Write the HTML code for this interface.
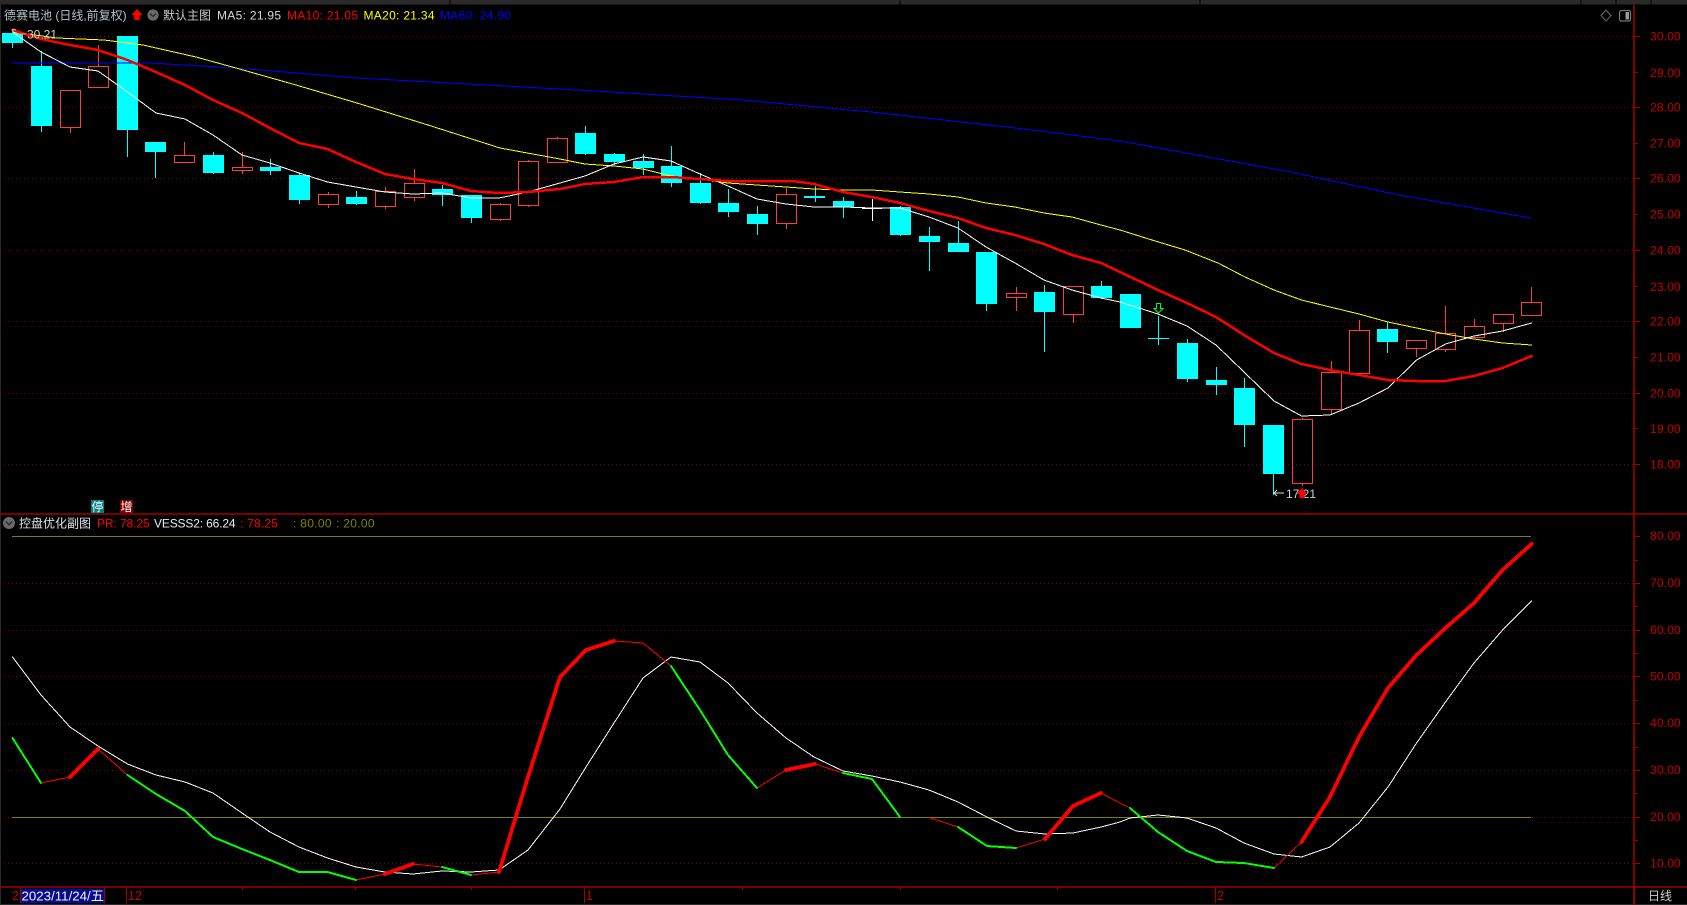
<!DOCTYPE html>
<html lang="zh">
<head>
<meta charset="utf-8">
<title>德赛电池</title>
<style>
html,body{margin:0;padding:0;background:#000;width:1687px;height:905px;overflow:hidden}
svg{display:block;position:absolute;left:0;top:0}
text{font-family:"Liberation Sans","Noto Sans CJK SC",sans-serif;font-size:12px}
.ax text{fill:#c00000;font-size:12.3px}
.l{fill:none;stroke-linejoin:round;stroke-linecap:round}
</style>
</head>
<body>
<svg width="1687" height="905" viewBox="0 0 1687 905" xmlns="http://www.w3.org/2000/svg">
<rect width="1687" height="905" fill="#000"/>
<!-- window edge strip -->
<rect x="0" y="0" width="1687" height="4.5" fill="#2a2a2a"/>
<path d="M1581 0V5M1616 0V5M1651 0V5M1200 0V5M900 0V5M450 0V5" stroke="#000" stroke-width="1"/>
<rect x="0" y="0" width="1" height="905" fill="#2a2a2a"/>
<rect x="0" y="904" width="1687" height="1" fill="#2a2a2a"/>

<!-- upper gridlines -->
<path shape-rendering="crispEdges" d="M0 36.5H1633M0 107.5H1633M0 178.5H1633M0 250.5H1633M0 321.5H1633M0 393.5H1633M0 464.5H1633" stroke="#8c0000" stroke-width="1" stroke-dasharray="1 3" fill="none"/>
<!-- lower gridlines -->
<path shape-rendering="crispEdges" d="M0 583.5H1633M0 630.5H1633M0 676.5H1633M0 723.5H1633M0 770.5H1633M0 817.5H1633M0 863.5H1633" stroke="#8c0000" stroke-width="1" stroke-dasharray="1 3" fill="none"/>

<!-- cyan wicks -->
<path shape-rendering="crispEdges" stroke="#00ffff" stroke-width="1" fill="none" d="M12.5 33V48M41.5 51V132M127.5 36V157M155.5 142V178M213.5 152V174M270.5 159V175M299.5 173V204M356.5 191V205M442.5 185V206M471.5 195V223M585.5 126V155M614.5 153V165M643.5 154V175M671.5 146V187M700.5 173V204M728.5 189V217M757.5 206V235M815.5 186V202M843.5 197V218M900.5 206V236M929.5 227V271M958.5 221V252M986.5 252V311M1044.5 285V352M1101.5 281V299M1158.5 316V345M1148 338.5H1169M1187.5 339V382M1216.5 367V395M1244.5 378V447M1273.5 425V495M1387.5 322V353"/>
<!-- cyan bodies -->
<path shape-rendering="crispEdges" fill="#00ffff" d="M2 33h21V43h-21zM31 66h21V126h-21zM117 36h21V130h-21zM145 142h21V152h-21zM203 155h21V173h-21zM260 167h21V171h-21zM289 175h21V200h-21zM346 197h21V204h-21zM432 189h21V195h-21zM461 195h21V218h-21zM575 133h21V154h-21zM604 154h21V162h-21zM633 161h21V168h-21zM661 166h21V183h-21zM690 183h21V203h-21zM718 203h21V212h-21zM747 214h21V224h-21zM804 196h21V198h-21zM833 201h21V207h-21zM890 207h21V235h-21zM919 236h21V242h-21zM948 243h21V252h-21zM976 252h21V304h-21zM1034 292h21V312h-21zM1091 286h21V298h-21zM1120 294h21V328h-21zM1177 343h21V379h-21zM1206 380h21V385h-21zM1234 388h21V425h-21zM1263 425h21V474h-21zM1377 329h21V342h-21z"/>
<!-- white doji -->
<path shape-rendering="crispEdges" stroke="#ffffff" stroke-width="1" fill="none" d="M872.5 199V221M862 208.5H882"/>
<!-- red candles -->
<path shape-rendering="crispEdges" stroke="#ff3c3c" stroke-width="1" fill="none" d="M60.5 90.5h20v37h-20zM70.5 127V133M88.5 66.5h20v21h-20zM98.5 45V66M98.5 87V88M174.5 155.5h20v7h-20zM184.5 142V155M232.5 167.5h20v3h-20zM242.5 152V167M242.5 170V174M318.5 194.5h20v10h-20zM328.5 192V194M328.5 204V208M375.5 191.5h20v15h-20zM385.5 187V191M385.5 206V209M404.5 183.5h20v14h-20zM414.5 169V183M414.5 197V201M490.5 204.5h20v15h-20zM500.5 203V204M500.5 219V221M518.5 161.5h20v44h-20zM528.5 160V161M528.5 205V207M547.5 138.5h20v24h-20zM557.5 137V138M776.5 194.5h20v29h-20zM786.5 188V194M786.5 223V229M1006.5 293.5h20v4h-20zM1016.5 287V293M1016.5 297V311M1063.5 286.5h20v28h-20zM1073.5 314V323M1292.5 419.5h20v64h-20zM1302.5 418V419M1302.5 483V486M1321.5 372.5h20v37h-20zM1331.5 361V372M1331.5 409V415M1349.5 330.5h20v43h-20zM1359.5 320V330M1406.5 340.5h20v8h-20zM1416.5 348V357M1435.5 333.5h20v16h-20zM1445.5 306V333M1445.5 349V352M1464.5 326.5h20v11h-20zM1474.5 319V326M1493.5 314.5h20v9h-20zM1503.5 323V332M1521.5 302.5h20v13h-20zM1531.5 287V302"/>

<!-- MA60 -->
<polyline class="l" shape-rendering="crispEdges" stroke="#0000ff" stroke-width="1" points="12.5,63 150,63 236,68 357,78 560,89 743,100 881,113 1024,129 1120,141 1291,172 1399,195 1531,218"/>
<!-- MA20 -->
<polyline class="l" shape-rendering="crispEdges" stroke="#ffff00" stroke-width="1" points="12.5,32 57,38 104,40 143,45 196,57 236,68 296,85 357,103 428,125 500,148 560,159 585,164 614,166 643,169 671,176 700,179 728,183 757,185 786,187 814,189 843,190 872,190 900,192 929,194 958,197 986,203 1015,207 1044,213 1072,217 1101,225 1120,230 1152,240 1185,250 1218,263 1245,277 1274,290 1301.5,300 1330,307 1359,314 1388,322 1416.6,328 1445.5,334 1474,339 1502.6,343 1531.6,345"/>
<!-- MA5 -->
<polyline class="l" shape-rendering="crispEdges" stroke="#ffffff" stroke-width="1" points="12.5,32 41,52 70,67 98,71 127.5,92 156,113 185,119 213,135 242,155 270,163 299,173 327.5,182 356,187 385,192 413,194 442,193 471,198 499,198 528,192 560,183 585,176 614,164 643,157 671,161 700,174 728,186 757,199 786,204 814,207 843,207 872,208 900,208 929,217 958,228 986,247 1015,263 1044,280 1072,290 1101,298 1120,302 1158,314 1187,326 1216,345 1244,372 1274,401 1301.5,416 1330,415 1359,403 1388,388 1416.6,360 1445.5,344 1474,336 1502.6,331 1531.6,323"/>
<!-- MA10 -->
<polyline class="l" shape-rendering="crispEdges" stroke="#ff0000" stroke-width="2.5" points="12.5,30 41,39 70,45 98,50 127.5,60 156,72 185,85 213,100 242,113 270,128 299,143 327.5,149 356,162 385,174 413,179 442,183 471,191 499,193 528,192 560,189 585,184 614,182 643,177 671,177 700,179 728,181 757,181 793,181 814,184 843,192 872,197 900,203 929,211 958,218 986,228 1015,235 1044,244 1072,255 1101,263 1120,272 1158,290 1187,303 1216,317 1244,335 1274,353 1301.5,364 1330,370 1359,375 1388,380 1416.6,381 1445.5,381 1474,376 1502.6,368 1531.6,356"/>

<!-- high/low markers -->
<path d="M12.5 29L16 30M12.5 29L13 33" stroke="#c8c8c8" stroke-width="1" fill="none"/>
<path d="M13 34H26" stroke="#c8c8c8" stroke-width="1" fill="none" opacity=".7"/>
<text x="27" y="38.5" fill="#d0d0d0">30.21</text>
<path d="M1274 493H1284M1274 493L1277 490M1274 493L1277 496" stroke="#d8d8d8" stroke-width="1" fill="none"/>
<text x="1286" y="498" fill="#c4d4e4">17.21</text>
<path d="M1302 488L1307.5 494H1304.5V498H1299.5V494H1296.5Z" fill="#ff0000"/>
<path shape-rendering="crispEdges" d="M1156.5 303.5H1160.5V308.5H1163L1158.5 313L1154 308.5H1156.5Z" fill="none" stroke="#00ff00" stroke-width="0.8"/>

<!-- panes frame -->
<path d="M0 514H1687M0 887H1687" stroke="#a00000" stroke-width="1.5" fill="none"/>
<path d="M1634 5V905" stroke="#a00000" stroke-width="1.6" fill="none"/>
<!-- ticks -->
<path shape-rendering="crispEdges" stroke="#a00000" stroke-width="1" fill="none" d="M1635 36.5H1640M1635 72.5H1638M1635 107.5H1640M1635 143.5H1638M1635 178.5H1640M1635 214.5H1638M1635 250.5H1640M1635 286.5H1638M1635 321.5H1640M1635 357.5H1638M1635 393.5H1640M1635 428.5H1638M1635 464.5H1640M1635 536.5H1640M1635 560.5H1638M1635 583.5H1640M1635 606.5H1638M1635 630.5H1640M1635 653.5H1638M1635 676.5H1640M1635 700.5H1638M1635 723.5H1640M1635 747.5H1638M1635 770.5H1640M1635 793.5H1638M1635 817.5H1640M1635 840.5H1638M1635 863.5H1640"/>
<!-- axis labels -->
<g class="ax">
<text x="1650" y="40.5">30.00</text>
<text x="1650" y="77">29.00</text>
<text x="1650" y="111.5">28.00</text>
<text x="1650" y="147.5">27.00</text>
<text x="1650" y="182.5">26.00</text>
<text x="1650" y="218.5">25.00</text>
<text x="1650" y="254.5">24.00</text>
<text x="1650" y="291">23.00</text>
<text x="1650" y="325.5">22.00</text>
<text x="1650" y="361.5">21.00</text>
<text x="1650" y="397.5">20.00</text>
<text x="1650" y="433">19.00</text>
<text x="1650" y="468.5">18.00</text>
<text x="1650" y="540">80.00</text>
<text x="1650" y="587">70.00</text>
<text x="1650" y="634">60.00</text>
<text x="1650" y="680.5">50.00</text>
<text x="1650" y="727">40.00</text>
<text x="1650" y="774">30.00</text>
<text x="1650" y="821">20.00</text>
<text x="1650" y="867.5">10.00</text>
</g>

<!-- olive lines -->
<path shape-rendering="crispEdges" d="M12 536.5H1531M12 817.5H1531" stroke="#808000" stroke-width="1" fill="none"/>

<!-- VESSS2 -->
<polyline class="l" shape-rendering="crispEdges" stroke="#ffffff" stroke-width="1" points="12.5,657 41,695 70,727 98,746 127.5,764 156,775 185,782 213,793 242,813 270,832 299,847 327.5,858 356,867 385,872 413,874 442,871 471,872 499,870 528,850 560,809 586,767 614,723 643,678 671,657 700,662 728,683 757,713 786,738 814,757 843,771 872,776 900,782 929,790 958,802 987,817 1016,831 1045,834 1073,833 1101,827 1120,822 1130,818 1158,815 1187,818 1216,828 1244,843 1274,854 1301.5,857 1330,847 1359,823 1388,787 1416.6,743 1445.5,702 1474,663 1502.6,630 1531.6,601"/>

<!-- PR thin red -->
<path class="l" shape-rendering="crispEdges" stroke="#ff0000" stroke-width="1" d="M41 783L70 777M98 749L127.5 775M356 880L385 874M413 864L442 867M471 875L499 872M614 641L643 643L671 666M757 788L786 770M815 764L843 773M929.6 817.7L958 827M1016 848L1045 839M1101 793L1120 803L1130 808M1274 868L1301.5 842"/>
<!-- PR green -->
<g class="l" shape-rendering="crispEdges" stroke="#00ff00" stroke-width="2">
<path d="M12.5 738L41 783"/>
<path d="M127.5 775L156 794L185 811L213 837L242 849L270 860L299 872L327.5 872L356 880"/>
<path d="M442 867L471 875"/>
<path d="M671 666L700 710L728 755L757 788"/>
<path d="M843 773L872 779L900 817"/>
<path d="M958 827L987 846L1016 848"/>
<path d="M1130 808L1158 832L1187 851L1216 862L1244 863L1274 868"/>
</g>
<!-- PR thick red -->
<g class="l" shape-rendering="crispEdges" stroke="#ff0000" stroke-width="3.8">
<path d="M70 777L98 749"/>
<path d="M385 874L413 864"/>
<path d="M499 872L528 777L560 677L586 650L614 641"/>
<path d="M786 770L815 764"/>
<path d="M1045 839L1073 806L1101 793"/>
<path d="M1301.5 842L1330 797L1359 737L1388 688L1416.6 655L1445.5 628L1474 603L1502.6 570L1531.6 544"/>
</g>

<!-- bottom axis -->
<path shape-rendering="crispEdges" stroke="#a00000" stroke-width="1" fill="none" d="M126.5 887V903M584.5 887V903M1215.5 887V903M242.5 887V890M355.5 887V890M471.5 887V890M742.5 887V890M900.5 887V890M1057.5 887V890M1634.5 887V905"/>
<text x="12" y="900" fill="#c00000" style="font-size:12.5px">2</text>
<rect x="21" y="889" width="84" height="14" fill="#0a0a8c"/>
<path shape-rendering="crispEdges" d="M20.5 887V903M104.5 887V903" stroke="#a00000" stroke-width="1"/>
<text x="21.5" y="900.5" fill="#f0f4ff" style="font-size:13.3px">2023/11/24/五</text>
<text x="128" y="900" fill="#c00000" style="font-size:12.5px">12</text>
<text x="586" y="900" fill="#c00000" style="font-size:12.5px">1</text>
<text x="1217" y="900" fill="#c00000" style="font-size:12.5px">2</text>
<text x="1648" y="900" fill="#cfcfcf">日线</text>

<!-- badges -->
<rect x="91" y="500" width="13" height="13" fill="#008080"/>
<text x="91.5" y="511" fill="#ffffff">停</text>
<rect x="120" y="500" width="13" height="13" fill="#800000"/>
<text x="120.5" y="511" fill="#ffffff">增</text>

<!-- top header -->
<text x="4" y="19.5" fill="#b8c0c8">德赛电池 (日线,前复权)</text>
<path d="M137 9L142.5 15H139.7V20H134.3V15H131.5Z" fill="#ff0000"/>
<circle cx="153" cy="15" r="5.6" fill="#6a6a6a"/>
<path d="M150 13.5L153 16.5L156 13.5" fill="none" stroke="#2a2a2a" stroke-width="1.4"/>
<text x="163" y="19.5" fill="#c4c8cc">默认主图</text>
<text x="217" y="19.5" fill="#d8d8d8" style="letter-spacing:.3px">MA5: 21.95</text>
<text x="287" y="19.5" fill="#ff0000" style="letter-spacing:.3px">MA10: 21.05</text>
<text x="363.5" y="19.5" fill="#ffff00" style="letter-spacing:.3px">MA20: 21.34</text>
<text x="440" y="19.5" fill="#0000ff" style="letter-spacing:.3px">MA60: 24.90</text>
<!-- top right icons -->
<path d="M1606 10L1611 15.5L1606 21L1601 15.5Z" fill="none" stroke="#666" stroke-width="1"/>
<rect x="1619.5" y="10.5" width="11" height="10.5" rx="2" fill="none" stroke="#777" stroke-width="1.2"/>
<rect x="1625.5" y="12" width="3.5" height="7.5" fill="#999"/>

<!-- lower pane header -->
<circle cx="9" cy="523" r="6" fill="#6a6a6a"/>
<path d="M5.8 521.5L9 524.7L12.2 521.5" fill="none" stroke="#2a2a2a" stroke-width="1.4"/>
<text x="19" y="527.5" fill="#dde4ea">控盘优化副图</text>
<text x="97" y="527.5" fill="#ff0000" style="letter-spacing:-.1px">PR: 78.25</text>
<text x="154" y="527.5" fill="#e8eef4" style="letter-spacing:-.15px">VESSS2: 66.24</text>
<text x="240" y="527.5" fill="#ff0000" style="letter-spacing:.2px">: 78.25</text>
<text x="293" y="527.5" fill="#808000" style="letter-spacing:.3px">: 80.00</text>
<text x="336" y="527.5" fill="#808000" style="letter-spacing:.3px">: 20.00</text>
</svg>
</body>
</html>
